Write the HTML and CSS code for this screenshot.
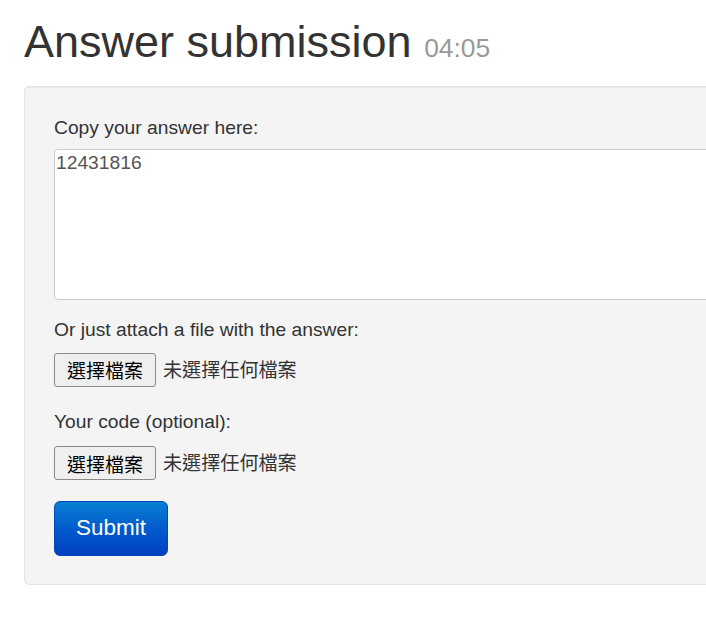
FILE: index.html
```html
<!DOCTYPE html>
<html lang="en">
<head>
<meta charset="utf-8">
<title>Answer submission</title>
<link rel="stylesheet" href="styles.css">
</head>
<body>
<div class="container">
  <h1 class="title">Answer submission <small class="timer">04:05</small></h1>
  <form class="well">
    <div class="group">
      <label class="label">Copy your answer here:</label>
      <textarea class="answer">12431816</textarea>
    </div>
    <div class="group">
      <label class="label">Or just attach a file with the answer:</label>
      <div class="file-row">
        <button type="button" class="file-btn">選擇檔案</button>
        <span class="file-name">未選擇任何檔案</span>
      </div>
    </div>
    <div class="group">
      <label class="label">Your code (optional):</label>
      <div class="file-row">
        <button type="button" class="file-btn">選擇檔案</button>
        <span class="file-name">未選擇任何檔案</span>
      </div>
    </div>
    <button type="submit" class="submit">Submit</button>
  </form>
</div>
</body>
</html>
```
FILE: styles.css
```css
html, body {
  margin: 0;
  padding: 0;
  overflow: hidden;
  background: #fff;
}
body {
  font-family: "Liberation Sans", "Noto Sans CJK TC", Arial, sans-serif;
  font-size: 19.25px;
  line-height: 27.5px;
  color: #333;
}
.container {
  padding-left: 24px;
  width: 1100px;
}
.title {
  margin: 17px 0 19px 0;
  font-size: 45px;
  line-height: 49.5px;
  font-weight: 400;
  color: #333;
}
.timer {
  font-size: 26.4px;
  line-height: 1;
  color: #999;
  font-weight: 400;
}
.well {
  display: block;
  background: #f4f4f4;
  border: 1px solid #e3e3e3;
  border-radius: 5px;
  box-shadow: inset 0 1px 1px rgba(0,0,0,0.05);
  padding: 27px 29px 28px 29px;
}
.group {
  margin-bottom: 16px;
}
.group:nth-child(2) {
  margin-bottom: 21px;
}
.label {
  display: block;
  margin-bottom: 8px;
  color: #333;
}
.group:nth-child(2) .label {
  margin-bottom: 9px;
}
.group:nth-child(3) .label {
  margin-bottom: 11px;
}
.answer {
  display: block;
  box-sizing: border-box;
  width: 100%;
  height: 151px;
  margin: 0;
  padding: 2px 1px;
  border: 1px solid #ccc;
  border-radius: 4px;
  background: #fff;
  font-family: "Liberation Sans", Arial, sans-serif;
  font-size: 19.25px;
  line-height: normal;
  color: #555;
  resize: none;
}
.file-row {
  display: flex;
  align-items: center;
  gap: 7px;
  height: 34px;
}
.file-btn {
  box-sizing: border-box;
  height: 34px;
  width: 102px;
  padding: 0;
  border: 1px solid #8a8a8a;
  border-radius: 3px;
  background: #efefef;
  color: #000;
  font-family: "Noto Sans CJK TC", sans-serif;
  font-size: 19px;
  line-height: 1;
}
.file-name {
  font-family: "Noto Sans CJK TC", sans-serif;
  font-size: 19.1px;
  color: #333;
}
.submit {
  display: block;
  box-sizing: border-box;
  width: 114px;
  height: 55px;
  margin-top: 21px;
  padding: 0;
  border: 1px solid #0346b5;
  border-radius: 6px;
  background: linear-gradient(to bottom, #0a7fd2 0%, #0058cc 55%, #0040c0 100%);
  color: #fff;
  font-family: "Liberation Sans", Arial, sans-serif;
  font-size: 22.5px;
  line-height: 1;
}
```
